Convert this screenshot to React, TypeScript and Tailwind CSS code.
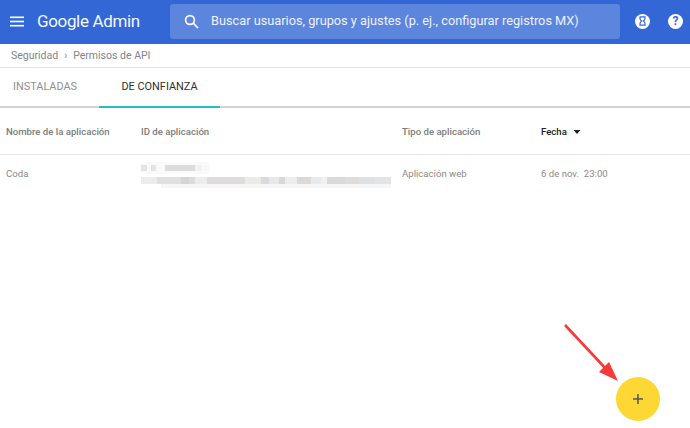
import React from "react";

const font = "font-['Roboto','Liberation_Sans',sans-serif]";

// pixelated patches that stand for the blurred client id
const topBlur = [
  { w: 6, c: "#e4e2e2" }, { w: 4, c: "#fafafa" }, { w: 5, c: "#e2e4e6" }, { w: 9, c: "#f8f8f8" },
  { w: 30, c: "#dcdcdc" }, { w: 6, c: "#f0f0f0" }, { w: 8, c: "#f8f8f8" },
];

const bottomBlur = [
  { w: 16, c: "#ececec" }, { w: 24, c: "#e0e0e0" }, { w: 8, c: "#d8d4d2" }, { w: 6, c: "#d8dde2" },
  { w: 12, c: "#ececec" }, { w: 38, c: "#dedcdc" }, { w: 16, c: "#ebebe8" }, { w: 8, c: "#d8dadd" },
  { w: 10, c: "#e8e8e8" }, { w: 6, c: "#d6d8dc" }, { w: 12, c: "#ececec" }, { w: 14, c: "#dcd8d6" },
  { w: 10, c: "#e6eaee" }, { w: 6, c: "#f0f0f0" }, { w: 18, c: "#dcdad8" }, { w: 14, c: "#e2dcd8" },
  { w: 16, c: "#dfe2e4" }, { w: 16, c: "#e4e4e4" },
];

const App = () => {
  return (
    <div className={`relative flex h-[428px] w-[690px] flex-col overflow-hidden bg-white ${font}`}>
      {/* Top bar */}
      <header className="flex h-11 shrink-0 items-center bg-[#3367d6] text-white">
        <svg className="ml-[10px] mr-[13px] -translate-y-[1px]" width="14" height="11" viewBox="0 0 14 11" fill="white">
          <rect x="0" y="0.5" width="14" height="1.6" />
          <rect x="0" y="4.7" width="14" height="1.6" />
          <rect x="0" y="8.9" width="14" height="1.6" />
        </svg>
        <span className="w-[133px] -translate-y-[1px] text-[17px] leading-none tracking-[-0.35px] text-[#f4f7fd]">
          Google Admin
        </span>
        <div className="flex h-[35px] w-[450px] -translate-y-[1px] items-center rounded-[3px] bg-[#5c85de]">
          <svg className="ml-[14px]" width="15" height="15" viewBox="0 0 15 15" fill="none" stroke="white" strokeWidth="1.7">
            <circle cx="6" cy="6" r="4.4" />
            <path d="M9.2 9.2 L14 14" />
          </svg>
          <span className="ml-[12px] text-[12.75px] text-[#eef2fc]">
            Buscar usuarios, grupos y ajustes (p. ej., configurar registros MX)
          </span>
        </div>
        <div className="ml-[15px] flex h-[15px] w-[15px] -translate-y-[1px] items-center justify-center rounded-full bg-white">
          <svg width="7" height="10" viewBox="0 0 7 10" fill="none" stroke="#3367d6" strokeWidth="1.2">
            <path d="M1 0.8 H6 V2.6 Q6 3.8 4.4 5 Q6 6.2 6 7.4 V9.2 H1 V7.4 Q1 6.2 2.6 5 Q1 3.8 1 2.6 Z" />
          </svg>
        </div>
        <div className="ml-[18px] flex h-[15px] w-[15px] -translate-y-[1px] items-center justify-center rounded-full bg-white text-[12px] font-bold leading-none text-[#3367d6]">
          ?
        </div>
      </header>

      {/* Breadcrumb */}
      <nav className="flex h-[24px] shrink-0 items-center border-b border-[#e6e6e6] pl-[11px] text-[10.5px] text-[#80868b]">
        <span>Seguridad</span>
        <span className="mx-[6px] text-[10px]">›</span>
        <span>Permisos de API</span>
      </nav>

      {/* Tabs */}
      <div className="flex h-[40px] shrink-0 border-b-2 border-[#d2d2d2] text-[10.9px]">
        <div className="flex w-[99px] items-center pl-[13px] text-[#8f8f8f]">INSTALADAS</div>
        <div className="-mb-[2px] flex w-[121px] items-center justify-center border-b-2 border-[#26bcd0] text-[#303030]">
          DE CONFIANZA
        </div>
      </div>

      {/* Table header */}
      <div className="grid h-[47px] shrink-0 grid-cols-[135px_261px_139px_1fr] items-center border-b border-[#e4e4e4] pt-[2px] pl-[6px] text-[9.6px] font-medium text-[#7c7c7c]">
        <span>Nombre de la aplicación</span>
        <span>ID de aplicación</span>
        <span>Tipo de aplicación</span>
        <span className="flex items-center text-[#212121]">
          Fecha
          <svg className="ml-[6px]" width="8" height="4" viewBox="0 0 8 4" fill="#212121">
            <path d="M0.5 0 H7.5 L4 4 Z" />
          </svg>
        </span>
      </div>

      {/* Row */}
      <div className="grid h-[38px] shrink-0 grid-cols-[135px_261px_139px_1fr] items-center pl-[6px] text-[9.6px] text-[#8a8a8a]">
        <span>Coda</span>
        <div className="flex translate-y-[1px] flex-col gap-[3px]">
          <div className="flex h-[12px] w-[68px] items-center bg-[#fafafa]">
            {topBlur.map((b, i) => (
              <div key={i} className="h-[6px]" style={{ width: b.w, backgroundColor: b.c }} />
            ))}
          </div>
          <div className="flex h-[7px] w-[251px]">
            {bottomBlur.map((b, i) => (
              <div key={i} className="h-full" style={{ width: b.w, backgroundColor: b.c }} />
            ))}
          </div>
          <div className="-mt-[3px] ml-[20px] h-[4px] w-[230px] bg-[#f6f6f6]" />
        </div>
        <span>Aplicación web</span>
        <span className="whitespace-pre">6 de nov.  23:00</span>
      </div>

      {/* Floating button */}
      <button className="absolute left-[616px] top-[377px] flex h-11 w-11 items-center justify-center rounded-full bg-[#fdd835]">
        <svg width="10" height="10" viewBox="0 0 10 10" fill="#555">
          <rect x="0" y="4.2" width="10" height="1.5" />
          <rect x="4.2" y="0" width="1.5" height="10" />
        </svg>
      </button>

      {/* Red annotation arrow */}
      <svg className="absolute left-[560px] top-[320px]" width="64" height="66" viewBox="0 0 64 66">
        <path d="M5 5 L47 50" stroke="#f93838" strokeWidth="2.6" />
        <path d="M58 61 L39 52 L49 42 Z" fill="#f93838" />
      </svg>
    </div>
  );
};

export default App;
